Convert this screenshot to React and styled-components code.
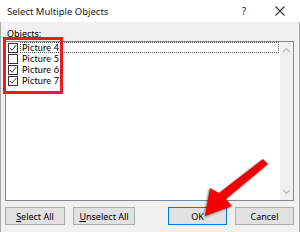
import React from "react";
import styled, { createGlobalStyle } from "styled-components";

const Global = createGlobalStyle`
  html, body { margin: 0; padding: 0; }
  body {
    width: 300px;
    height: 232px;
    overflow: hidden;
    background: #f0f0f0;
    font-family: "Noto Sans", "Open Sans", sans-serif;
    color: #000;
  }
`;

const items = [
  { name: "Picture 4", checked: true, focused: true },
  { name: "Picture 5", checked: false },
  { name: "Picture 6", checked: true },
  { name: "Picture 7", checked: true },
];

export default function App() {
  return (
    <Window>
      <Global />
      <TitleBar>
        <Title>Select Multiple Objects</Title>
        <TitleButton>?</TitleButton>
        <TitleButton>
          <svg width="10" height="10" viewBox="0 0 10 10">
            <path d="M0.5 0.5 L9.5 9.5 M9.5 0.5 L0.5 9.5" stroke="#333" strokeWidth="1.1" fill="none" />
          </svg>
        </TitleButton>
      </TitleBar>
      <Body>
        <Label>Objects:</Label>
        <ListBox>
          <Items>
            {items.map((it) => (
              <Row key={it.name}>
                <Check>
                  {it.checked && (
                    <svg width="8" height="8" viewBox="0 0 8 8">
                      <path d="M0.8 4 L3 6.3 L7.3 1" stroke="#333" strokeWidth="1" fill="none" />
                    </svg>
                  )}
                </Check>
                <ItemText $focused={it.focused}>{it.name}</ItemText>
              </Row>
            ))}
          </Items>
          <ScrollBar>
            <svg width="9" height="6" viewBox="0 0 9 6">
              <path d="M1 5 L4.5 1.5 L8 5" stroke="#bcbcbc" strokeWidth="1.2" fill="none" />
            </svg>
            <svg width="9" height="6" viewBox="0 0 9 6">
              <path d="M1 1 L4.5 4.5 L8 1" stroke="#bcbcbc" strokeWidth="1.2" fill="none" />
            </svg>
          </ScrollBar>
        </ListBox>
        <Buttons>
          <Button $w={60}><u>S</u>elect All</Button>
          <Button $w={62}><u>U</u>nselect All</Button>
          <Spacer />
          <Button $w={59} $default>OK</Button>
          <Button $w={59}>Cancel</Button>
        </Buttons>
      </Body>
      <Highlight />
      <Arrow viewBox="0 0 300 232" width="300" height="232">
        <polygon
          points="263,159 268,164 226,199 232,206 205,216 210,188 219,193"
          fill="#f40000"
        />
      </Arrow>
    </Window>
  );
}

const Window = styled.div`
  position: relative;
  width: 300px;
  height: 232px;
  display: flex;
  flex-direction: column;
`;

const TitleBar = styled.div`
  height: 22px;
  background: #fff;
  display: flex;
  align-items: center;
  padding: 0 8px 0 7px;
`;

const Title = styled.div`
  flex: 1;
  font-size: 9.5px;
  color: #1a1a1a;
`;

const TitleButton = styled.div`
  width: 24px;
  height: 22px;
  display: flex;
  align-items: center;
  justify-content: center;
  font-size: 10px;
  color: #333;
  margin-left: 12px;
`;

const Body = styled.div`
  flex: 1;
  display: flex;
  flex-direction: column;
  padding: 0 5px 0 4px;
  border-left: 1px solid #a8a8a8;
  border-right: 1px solid #a8a8a8;
`;

const Label = styled.div`
  height: 19px;
  box-sizing: border-box;
  padding: 6px 0 0 2px;
  line-height: 11px;
  font-size: 9px;
`;

const ListBox = styled.div`
  height: 160px;
  box-sizing: border-box;
  border: 1px solid #828790;
  background: #fff;
  display: flex;
`;

const Items = styled.div`
  flex: 1;
  display: flex;
  flex-direction: column;
  padding-right: 1px;
`;

const Row = styled.div`
  height: 11px;
  display: flex;
  align-items: center;
`;

const Check = styled.div`
  width: 10px;
  height: 10px;
  box-sizing: border-box;
  border: 1px solid #333;
  margin: 0 2px 0 2px;
  display: flex;
  align-items: center;
  justify-content: center;
  background: #fff;
`;

const ItemText = styled.div`
  flex: 1;
  height: 11px;
  padding-left: 2px;
  font-family: Lato, "Noto Sans", sans-serif;
  font-size: 9.1px;
  line-height: 11px;
  letter-spacing: 0.15px;
  outline: 1px dotted ${(p) => (p.$focused ? "#555" : "transparent")};
  outline-offset: -1px;
`;

const ScrollBar = styled.div`
  width: 13px;
  background: #f0f0f0;
  display: flex;
  flex-direction: column;
  align-items: center;
  justify-content: space-between;
  padding: 5px 0 5px;
`;

const Buttons = styled.div`
  margin-top: 6px;
  height: 18px;
  display: flex;
  gap: 8px;
`;

const Spacer = styled.div`
  flex: 1;
`;

const Button = styled.div`
  width: ${(p) => p.$w}px;
  height: 18px;
  box-sizing: border-box;
  background: #e1e1e1;
  border: 1px solid ${(p) => (p.$default ? "#0078d7" : "#adadad")};
  display: flex;
  align-items: center;
  justify-content: center;
  font-size: 9px;
  u { text-decoration-thickness: 1px; text-underline-offset: 1px; }
`;

const Highlight = styled.div`
  position: absolute;
  left: 3px;
  top: 37px;
  width: 60px;
  height: 57px;
  box-sizing: border-box;
  border: 3px solid #ee1b1b;
  pointer-events: none;
`;

const Arrow = styled.svg`
  position: absolute;
  left: 0;
  top: 0;
  pointer-events: none;
  filter: drop-shadow(-1px 1px 1px rgba(0, 0, 0, 0.55));
`;
